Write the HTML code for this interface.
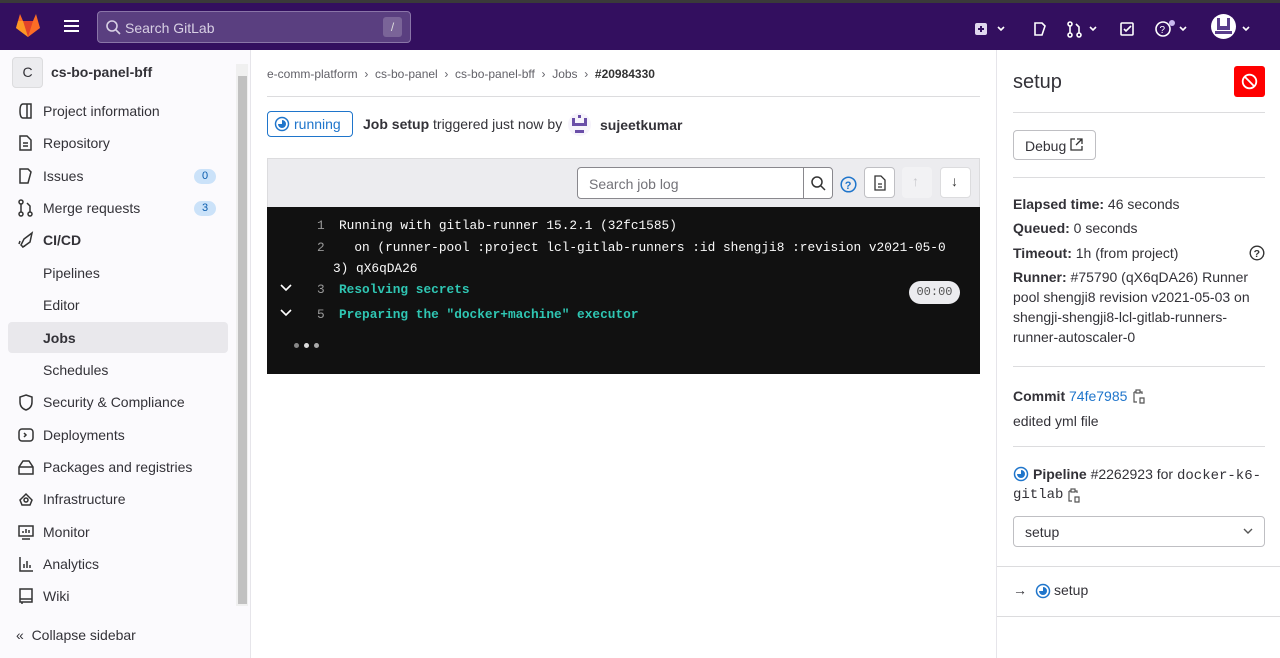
<!DOCTYPE html>
<html><head><meta charset="utf-8"><style>
*{box-sizing:border-box;margin:0;padding:0}
body{width:1280px;height:658px;overflow:hidden;font-family:"Liberation Sans",sans-serif;font-size:14px;color:#333238;background:#fff;position:relative}
.top{position:absolute;left:0;top:0;width:1280px;height:50px;background:#330f5f;border-top:3px solid #3a3a3a}
.search{position:absolute;left:97px;top:8px;width:314px;height:32px;background:#5a3f80;border:1px solid #8a75a8;border-radius:4px;color:#d8d0e4;font-size:14px;padding:8px 0 0 27px}
.search .k{position:absolute;right:8px;top:5px;width:19px;height:20px;background:#7a6498;border-radius:3px;color:#ddd;text-align:center;font-size:12px;line-height:20px}
.side{position:absolute;left:0;top:50px;width:251px;height:608px;background:#fbfafd;border-right:1px solid #e6e5ea}
.item{position:absolute;left:43px;font-size:14px;color:#333238}
.ic{position:absolute;left:17px;width:18px;height:18px;fill:none;stroke:#333;stroke-width:1.5}
.badge{position:absolute;left:194px;width:22px;height:15px;background:#cbe2f9;color:#0b5cad;border-radius:8px;font-size:11px;text-align:center;line-height:15px}
.sb{position:absolute;left:236px;top:64px;width:12px;height:542px;background:#f0f0f0}
.sb div{position:absolute;left:2px;top:12px;width:9px;height:528px;background:#c1c1c1}
.mono{font-family:"Liberation Mono",monospace}
.log{position:absolute;left:267px;top:207px;width:713px;height:167px;background:#111;color:#fafafa;font-size:12.8px}
.log .l{position:absolute;white-space:pre}
.ln{color:#999;position:absolute}
.g{color:#2fc6b3;font-weight:bold}
.rs{position:absolute;left:996px;top:50px;width:284px;height:608px;border-left:1px solid #e6e5ea;background:#fff}
.rs .t{position:absolute;left:16px;font-size:14px;line-height:20px}
.hr{position:absolute;height:1px;background:#dcdcde}
</style></head><body>
<div class="top">
<svg style="position:absolute;left:15px;top:10px" width="26" height="25" viewBox="0 0 26 25"><path d="M13 24 L1 15 L3 8 L5 1 L8 8 L18 8 L21 1 L23 8 L25 15Z" fill="#fc6d26"/><path d="M13 24 L8 8 L18 8Z" fill="#e24329"/><path d="M1 15 L3 8 L8 8 L13 24Z" fill="#fca326" opacity=".8"/></svg>
<div style="position:absolute;left:64px;top:17px;width:15px;height:2px;background:#fff;box-shadow:0 5px 0 #fff,0 10px 0 #fff"></div>
<div class="search"><svg style="position:absolute;left:8px;top:8px" width="15" height="15" viewBox="0 0 15 15"><circle cx="6" cy="6" r="5" stroke="#d8d0e4" stroke-width="1.6" fill="none"/><path d="M10 10l4 4" stroke="#d8d0e4" stroke-width="1.6"/></svg>Search GitLab<div class="k">/</div></div>
<svg style="position:absolute;left:972px;top:17px" width="290" height="20" viewBox="0 0 290 20" fill="none" stroke="#fff" stroke-width="1.6">
<rect x="3" y="3" width="12" height="12" rx="2" fill="#e0d8ee" stroke="none"/><path d="M9 6v6M6 9h6" stroke="#330f5f" stroke-width="2"/>
<path d="M26 7l3 3 3-3"/>
<path d="M63 3h7l3 3-3 9h-7z"/>
<circle cx="98" cy="4" r="2"/><circle cx="98" cy="15" r="2"/><path d="M98 6v7"/><circle cx="107" cy="15" r="2"/><path d="M107 13v-6l-3-3"/>
<path d="M118 7l3 3 3-3"/>
<rect x="149" y="3" width="12" height="12" rx="1"/><path d="M152 9l2 2 5-5"/>
<circle cx="191" cy="9" r="7"/><text x="187.5" y="13" font-size="10" fill="#fff" stroke="none" font-family="Liberation Sans">?</text>
<circle cx="200" cy="3" r="3" fill="#c9b8ef" stroke="none"/><path d="M208 7l3 3 3-3"/>
<path d="M271 7l3 3 3-3"/></svg>
<div style="position:absolute;left:1211px;top:11px;width:25px;height:25px;border-radius:50%;background:#fff;overflow:hidden"><div style="position:absolute;left:6px;top:4px;width:13px;height:12px;background:#5a3e8c"></div><div style="position:absolute;left:9px;top:4px;width:7px;height:8px;background:#fff"></div><div style="position:absolute;left:4px;top:17px;width:17px;height:3px;background:#5a3e8c"></div></div>
</div>

<div class="side">
<div style="position:absolute;left:12px;top:7px;width:31px;height:31px;background:#ececef;border:1px solid #dcdcde;border-radius:4px;text-align:center;line-height:29px;font-size:14px">C</div>
<div style="position:absolute;left:51px;top:14px;font-weight:bold;font-size:14px">cs-bo-panel-bff</div>
<div style="position:absolute;left:8px;top:272px;width:220px;height:31px;background:#e9e8ec;border-radius:4px"></div>
<svg class="ic" style="top:52px" viewBox="0 0 18 18"><path d="M6 2h8v14H6c-2 0-3-2-3-7s1-7 3-7z M10 2v14"/></svg>
<svg class="ic" style="top:84px" viewBox="0 0 18 18"><path d="M3 2h7l4 4v10H3z M6 9h5M6 12h5"/></svg>
<svg class="ic" style="top:117px" viewBox="0 0 18 18"><path d="M3 2h8l3 3-3 11H3z"/></svg>
<svg class="ic" style="top:149px" viewBox="0 0 18 18"><circle cx="4" cy="3" r="2"/><circle cx="4" cy="15" r="2"/><path d="M4 5v8"/><circle cx="13" cy="15" r="2"/><path d="M13 13v-6l-3-3"/></svg>
<svg class="ic" style="top:181px" viewBox="0 0 18 18"><path d="M4 14l3-6 8-6-2 9-7 5z M3 10l-1 3M8 15l-3 1"/></svg>
<svg class="ic" style="top:343px" viewBox="0 0 18 18"><path d="M9 2l6 2v5c0 5-3 7-6 8-3-1-6-3-6-8V4z"/></svg>
<svg class="ic" style="top:376px" viewBox="0 0 18 18"><rect x="2" y="3" width="14" height="12" rx="3"/><path d="M7 7l2 2-2 2"/></svg>
<svg class="ic" style="top:408px" viewBox="0 0 18 18"><path d="M2 16V9l4-6h6l4 6v7z M2 9h14"/></svg>
<svg class="ic" style="top:440px" viewBox="0 0 18 18"><path d="M3 10l6-6 6 6-2 5H5z"/><circle cx="9" cy="10" r="2"/></svg>
<svg class="ic" style="top:473px" viewBox="0 0 18 18"><rect x="2" y="3" width="14" height="10"/><path d="M6 10V8M9 10V6M12 10V7M5 16h8"/></svg>
<svg class="ic" style="top:505px" viewBox="0 0 18 18"><path d="M3 2v14h13M7 13V9M10 13V6M13 13v-3"/></svg>
<svg class="ic" style="top:537px" viewBox="0 0 18 18"><path d="M3 2h12v13H3z M3 12h12M5 15v2"/></svg>
<div class="item" style="top:53px">Project information</div>
<div class="item" style="top:85px">Repository</div>
<div class="item" style="top:118px">Issues</div><div class="badge" style="top:119px">0</div>
<div class="item" style="top:150px">Merge requests</div><div class="badge" style="top:151px">3</div>
<div class="item" style="top:182px;font-weight:bold">CI/CD</div>
<div class="item" style="top:215px">Pipelines</div>
<div class="item" style="top:247px">Editor</div>
<div class="item" style="top:280px;font-weight:bold">Jobs</div>
<div class="item" style="top:312px">Schedules</div>
<div class="item" style="top:344px">Security &amp; Compliance</div>
<div class="item" style="top:377px">Deployments</div>
<div class="item" style="top:409px">Packages and registries</div>
<div class="item" style="top:441px">Infrastructure</div>
<div class="item" style="top:474px">Monitor</div>
<div class="item" style="top:506px">Analytics</div>
<div class="item" style="top:538px">Wiki</div>
<div style="position:absolute;left:16px;top:577px;font-size:14px;white-space:pre">«  Collapse sidebar</div>
</div>
<div class="sb"><div></div></div>

<div style="position:absolute;left:267px;top:67px;font-size:12px;color:#626168;white-space:pre">e-comm-platform  ›  cs-bo-panel  ›  cs-bo-panel-bff  ›  Jobs  ›  <b style="color:#333">#20984330</b></div>
<div class="hr" style="left:267px;top:96px;width:713px"></div>
<div style="position:absolute;left:267px;top:111px;width:86px;height:26px;border:1px solid #1f75cb;border-radius:4px;color:#1f75cb;font-size:14px;padding:4px 0 0 26px">running</div>
<svg style="position:absolute;left:274px;top:116px" width="16" height="16" viewBox="0 0 16 16"><circle cx="8" cy="8" r="6.5" fill="none" stroke="#1f75cb" stroke-width="1.5"/><path d="M8 4a4 4 0 1 1-4 4h4z" fill="#1f75cb"/></svg>
<div style="position:absolute;left:363px;top:116px;font-size:14px"><b>Job setup</b> triggered just now by</div>
<div style="position:absolute;left:568px;top:113px;width:23px;height:23px;border-radius:50%;background:#f6f3fb"><div style="position:absolute;left:4px;top:10px;width:15px;height:3px;background:#6a4ea8"></div><div style="position:absolute;left:4px;top:5px;width:3px;height:6px;background:#6a4ea8"></div><div style="position:absolute;left:16px;top:5px;width:3px;height:6px;background:#6a4ea8"></div><div style="position:absolute;left:10px;top:2px;width:3px;height:3px;background:#6a4ea8"></div><div style="position:absolute;left:7px;top:17px;width:9px;height:3px;background:#6a4ea8"></div></div>
<div style="position:absolute;left:600px;top:117px;font-weight:bold;font-size:14px">sujeetkumar</div>

<div style="position:absolute;left:267px;top:158px;width:713px;height:50px;background:#ececef;border:1px solid #dcdcde"></div>
<div style="position:absolute;left:577px;top:167px;width:256px;height:32px;background:#fff;border:1px solid #89888d;border-radius:4px;color:#737278;font-size:14px;padding:8px 0 0 11px">Search job log</div>
<div style="position:absolute;left:803px;top:167px;width:1px;height:32px;background:#89888d"></div>
<svg style="position:absolute;left:810px;top:175px" width="16" height="16" viewBox="0 0 16 16"><circle cx="7" cy="7" r="5" fill="none" stroke="#333" stroke-width="1.5"/><path d="M11 11l4 4" stroke="#333" stroke-width="1.5"/></svg>
<svg style="position:absolute;left:840px;top:176px" width="17" height="17" viewBox="0 0 17 17"><circle cx="8.5" cy="8.5" r="7.3" fill="none" stroke="#1f75cb" stroke-width="1.5"/><text x="4.8" y="13" font-size="11" font-family="Liberation Sans" fill="#1f75cb" font-weight="bold">?</text></svg>
<div style="position:absolute;left:864px;top:167px;width:31px;height:31px;background:#fff;border:1px solid #bfbfc3;border-radius:4px"></div>
<svg style="position:absolute;left:872px;top:175px" width="16" height="16" viewBox="0 0 16 16" fill="none" stroke="#333" stroke-width="1.3"><path d="M3 1h6l4 4v10H3z M6 9h4M6 12h4"/></svg>
<div style="position:absolute;left:902px;top:167px;width:30px;height:31px;background:#f2f2f4;border-radius:4px"></div>
<div style="position:absolute;left:912px;top:173px;color:#c8c8cc;font-size:14px">↑</div>
<div style="position:absolute;left:940px;top:167px;width:31px;height:31px;background:#fff;border:1px solid #dcdcde;border-radius:4px"></div>
<div style="position:absolute;left:951px;top:173px;color:#333;font-size:14px">↓</div>

<div class="log mono">
<div class="ln" style="left:50px;top:11px">1</div><div class="l" style="left:72px;top:11px">Running with gitlab-runner 15.2.1 (32fc1585)</div>
<div class="ln" style="left:50px;top:33px">2</div><div class="l" style="left:72px;top:33px">  on (runner-pool :project lcl-gitlab-runners :id shengji8 :revision v2021-05-0</div>
<div class="l" style="left:66px;top:54px">3) qX6qDA26</div>
<svg style="position:absolute;left:13px;top:77px" width="12" height="8" viewBox="0 0 12 8"><path d="M1 1l5 5 5-5" fill="none" stroke="#fff" stroke-width="1.6"/></svg>
<div class="ln" style="left:50px;top:75px">3</div><div class="l g" style="left:72px;top:75px">Resolving secrets</div>
<svg style="position:absolute;left:13px;top:102px" width="12" height="8" viewBox="0 0 12 8"><path d="M1 1l5 5 5-5" fill="none" stroke="#fff" stroke-width="1.6"/></svg>
<div class="ln" style="left:50px;top:100px">5</div><div class="l g" style="left:72px;top:100px">Preparing the "docker+machine" executor</div>
<div style="position:absolute;left:642px;top:74px;width:51px;height:23px;background:#ececef;color:#555;border-radius:12px;text-align:center;line-height:23px;font-size:12px">00:00</div>
<div style="position:absolute;left:27px;top:136px;width:5px;height:5px;border-radius:50%;background:#888;box-shadow:10px 0 0 #ddd,20px 0 0 #aaa"></div>
</div>

<div class="rs">
<div style="position:absolute;left:16px;top:21px;font-size:20px">setup</div>
<div style="position:absolute;left:237px;top:16px;width:31px;height:31px;background:#f00;border-radius:3px"><svg style="position:absolute;left:7px;top:7px" width="17" height="17" viewBox="0 0 17 17" fill="none" stroke="#fff" stroke-width="1.8"><circle cx="8.5" cy="8.5" r="6.8"/><path d="M3.8 3.8l9.4 9.4"/></svg></div>
<div class="hr" style="left:16px;top:62px;width:252px"></div>
<div style="position:absolute;left:16px;top:80px;width:83px;height:30px;border:1px solid #bfbfc3;border-radius:4px;padding:7px 0 0 11px;font-size:14px">Debug</div>
<svg style="position:absolute;left:72px;top:87px" width="15" height="15" viewBox="0 0 15 15" fill="none" stroke="#333" stroke-width="1.3"><path d="M6 2H2v11h11V9M8 2h5v5M13 2L7 8"/></svg>
<div class="hr" style="left:16px;top:127px;width:252px"></div>
<div class="t" style="top:144px"><b>Elapsed time:</b> 46 seconds</div>
<div class="t" style="top:168px"><b>Queued:</b> 0 seconds</div>
<div class="t" style="top:193px"><b>Timeout:</b> 1h (from project)</div>
<svg style="position:absolute;left:252px;top:195px" width="16" height="16" viewBox="0 0 16 16"><circle cx="8" cy="8" r="6.8" fill="none" stroke="#333" stroke-width="1.4"/><text x="4.6" y="12.2" font-size="10.5" font-family="Liberation Sans" font-weight="bold" fill="#333">?</text></svg>
<div class="t" style="top:217px;width:240px"><b>Runner:</b> #75790 (qX6qDA26) Runner pool shengji8 revision v2021-05-03 on shengji-shengji8-lcl-gitlab-runners-runner-autoscaler-0</div>
<div class="hr" style="left:16px;top:316px;width:252px"></div>
<div class="t" style="top:336px"><b>Commit</b> <span style="color:#1f75cb">74fe7985</span></div>
<svg style="position:absolute;left:134px;top:339px" width="14" height="16" viewBox="0 0 14 16" fill="none" stroke="#555" stroke-width="1.2"><path d="M3 3h2M9 3h2v2M3 3v10h3M9 9h4v5H9z"/><rect x="5" y="1" width="4" height="3"/></svg>
<div class="t" style="top:361px">edited yml file</div>
<div class="hr" style="left:16px;top:396px;width:252px"></div>
<div class="t" style="top:414px;padding-left:20px"><b>Pipeline</b> #2262923 for <span class="mono">docker-k6-</span></div>
<div class="t mono" style="top:435px">gitlab</div>
<svg style="position:absolute;left:69px;top:438px" width="14" height="16" viewBox="0 0 14 16" fill="none" stroke="#555" stroke-width="1.2"><path d="M3 3h2M9 3h2v2M3 3v10h3M9 9h4v5H9z"/><rect x="5" y="1" width="4" height="3"/></svg>
<svg style="position:absolute;left:16px;top:416px" width="16" height="16" viewBox="0 0 16 16"><circle cx="8" cy="8" r="6.5" fill="none" stroke="#1f75cb" stroke-width="1.5"/><path d="M8 4a4 4 0 1 1-4 4h4z" fill="#1f75cb"/></svg>
<div style="position:absolute;left:16px;top:466px;width:252px;height:31px;border:1px solid #bfbfc3;border-radius:4px;padding:7px 0 0 11px;font-size:14px">setup</div>
<svg style="position:absolute;left:246px;top:477px" width="10" height="8" viewBox="0 0 10 8"><path d="M1 2l4 4 4-4" fill="none" stroke="#555" stroke-width="1.4"/></svg>
<div class="hr" style="left:0;top:516px;width:284px"></div>
<div class="t" style="top:530px">→</div>
<svg style="position:absolute;left:38px;top:533px" width="16" height="16" viewBox="0 0 16 16"><circle cx="8" cy="8" r="6.5" fill="none" stroke="#1f75cb" stroke-width="1.5"/><path d="M8 4a4 4 0 1 1-4 4h4z" fill="#1f75cb"/></svg>
<div class="t" style="top:530px;left:57px">setup</div>
<div class="hr" style="left:0;top:566px;width:284px"></div>
</div>
</body></html>
